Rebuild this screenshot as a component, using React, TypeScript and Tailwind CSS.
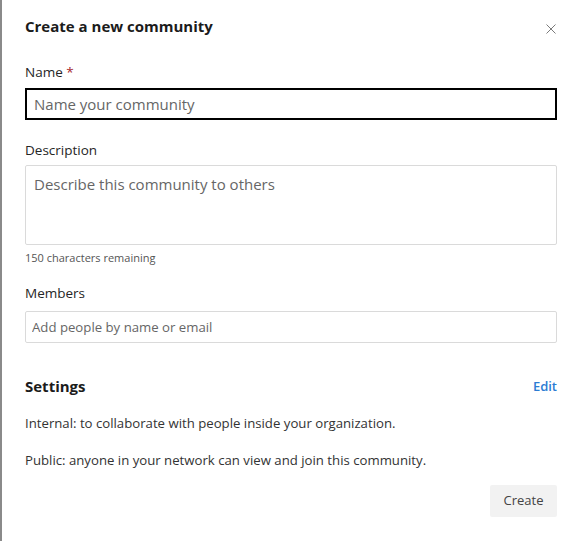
import React from 'react';

const font = { fontFamily: '"Open Sans", "Noto Sans", Arial, sans-serif' };

const App: React.FC = () => {
  return (
    <div
      className="w-[580px] h-[541px] bg-white border-l-2 border-[#8a8a8a] pl-[23px] pr-[23px] pt-[16px] text-[#252525] overflow-hidden"
      style={font}
    >
      {/* header */}
      <div className="flex items-center justify-between h-[20px]">
        <h1 className="text-[15px] leading-[20px] font-bold text-[#1b1b1b]">Create a new community</h1>
        <button className="w-[12px] h-[12px] flex items-center justify-center mt-[5px]">
          <svg width="10" height="10" viewBox="0 0 10 10" fill="none" stroke="#7a7a7a" strokeWidth="1">
            <path d="M0.5 0.5 L9.5 9.5 M9.5 0.5 L0.5 9.5" />
          </svg>
        </button>
      </div>

      {/* name */}
      <label className="block mt-[26px] text-[13.5px] leading-[20px]">
        Name <span className="text-[#a4262c]">*</span>
      </label>
      <input
        className="mt-[6px] w-full h-[32px] border-2 border-black px-[7px] text-[15px] placeholder:text-[#666] outline-none"
        placeholder="Name your community"
      />

      {/* description */}
      <label className="block mt-[20px] text-[13.5px] leading-[20px]">Description</label>
      <textarea
        className="mt-[5px] w-full h-[80px] border border-[#dadada] rounded-[2px] px-[8px] py-[8px] text-[15px] leading-[20px] placeholder:text-[#666] outline-none resize-none block"
        placeholder="Describe this community to others"
      />
      <div className="mt-[5px] text-[11px] leading-[16px] text-[#555]">150 characters remaining</div>

      {/* members */}
      <label className="block mt-[17px] text-[13.5px] leading-[20px]">Members</label>
      <input
        className="mt-[8px] w-full h-[32px] border border-[#dadada] rounded-[2px] px-[6px] text-[13.2px] placeholder:text-[#666] outline-none"
        placeholder="Add people by name or email"
      />

      {/* settings */}
      <div className="mt-[33px] flex items-center justify-between h-[20px]">
        <h2 className="text-[15px] leading-[20px] font-bold text-[#1b1b1b]">Settings</h2>
        <a className="text-[13px] leading-[20px] font-semibold text-[#2b7cd3]">Edit</a>
      </div>
      <p className="mt-[17px] text-[13.2px] leading-[20px] text-[#333]">
        Internal: to collaborate with people inside your organization.
      </p>
      <p className="mt-[17px] text-[13.2px] leading-[20px] text-[#333]">
        Public: anyone in your network can view and join this community.
      </p>

      <div className="mt-[15px] flex justify-end">
        <button className="w-[67px] h-[32px] bg-[#f2f2f2] rounded-[2px] text-[13px] text-[#444]">Create</button>
      </div>
    </div>
  );
};

export default App;
